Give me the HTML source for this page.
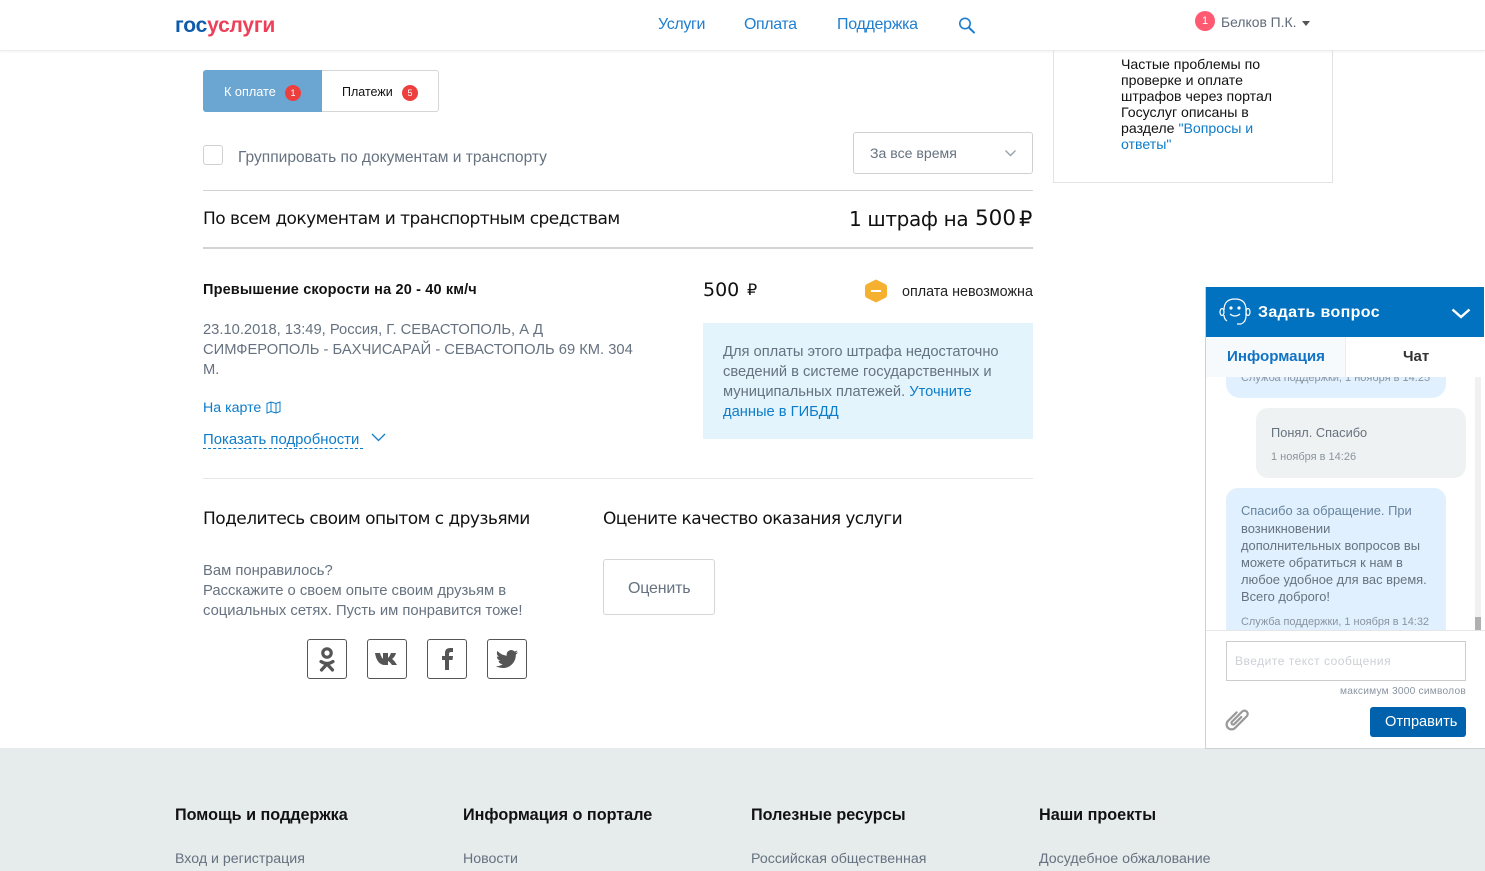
<!DOCTYPE html>
<html lang="ru"><head><meta charset="utf-8"><title>Госуслуги</title>
<style>
html,body{margin:0;padding:0;width:1485px;height:871px;overflow:hidden;background:#fff}
body{position:relative;font-family:"Liberation Sans","Noto Sans CJK SC",sans-serif;color:#66727f}
.a{position:absolute}
.t{position:absolute;white-space:nowrap;line-height:20px;font-size:14px}
.h{font-family:"DejaVu Sans",sans-serif;color:#111;font-size:17px;letter-spacing:-.54px}
.b{color:#0d7cc9}
.blk{color:#111}
.badge{position:absolute;width:16px;height:16px;border-radius:50%;background:#ee3f3f;color:#fff;font-size:9px;line-height:16px;text-align:center}
.soc{position:absolute;top:639px;width:38px;height:38px;border:1px solid #555;border-radius:3px}
.soc svg{position:absolute;left:0;top:0}
.f{font-size:14.2px;color:#66727f}
.ft{font-size:16.2px;font-weight:bold;color:#111}
.chat{font-size:12.9px;color:#66727f;line-height:17px}
</style></head><body>

<!-- header -->
<div class="a" style="left:0;top:0;width:1485px;height:50px;background:#fff;border-bottom:1px solid #ececec;box-shadow:0 1px 2px rgba(0,0,0,.05);z-index:3"></div>
<div style="z-index:4;position:absolute;left:0;top:0;width:1485px;height:50px">
<div class="t" style="left:175px;top:15px;font-size:21px;font-weight:bold;letter-spacing:-.2px;line-height:22px"><span style="color:#0d5cab">гос</span><span style="color:#ee3f58">услуги</span></div>
<div class="t" style="left:658px;top:15px;font-size:16px;color:#1f7fcf;letter-spacing:-.35px">Услуги</div>
<div class="t" style="left:744px;top:15px;font-size:16px;color:#1f7fcf;letter-spacing:-.4px">Оплата</div>
<div class="t" style="left:837px;top:15px;font-size:16px;color:#1f7fcf;letter-spacing:-.3px">Поддержка</div>
<svg class="a" style="left:958px;top:16.500px" width="18" height="17" viewBox="0 0 18 17" fill="none" stroke="#1f7fcf" stroke-width="1.600"><circle cx="7" cy="6.500" r="5.200"/><path d="M10.800 10.500l5.200 5" stroke-linecap="round" stroke-width="2"/></svg>
<div class="a" style="left:1195px;top:11px;width:20px;height:20px;border-radius:50%;background:#ff5a72;color:#fff;font-size:11px;line-height:20px;text-align:center">1</div>
<div class="t" style="left:1221px;top:12px;font-size:13.900px;color:#5f6b78">Белков П.К.</div>
<div class="a" style="left:1302px;top:21px;width:0;height:0;border-left:4px solid transparent;border-right:4px solid transparent;border-top:5px solid #555"></div>
</div>

<!-- right note -->
<div class="a" style="left:1053px;top:40px;width:278px;height:141px;border:1px solid #e3e3e3;background:#fff"></div>
<div class="t blk" style="left:1121px;top:54px;font-size:14.150px">Частые проблемы по</div>
<div class="t blk" style="left:1121px;top:70px;font-size:14.150px">проверке и оплате</div>
<div class="t blk" style="left:1121px;top:86px;font-size:14.150px">штрафов через портал</div>
<div class="t blk" style="left:1121px;top:102px;font-size:14.150px">Госуслуг описаны в</div>
<div class="t blk" style="left:1121px;top:118px;font-size:14.150px">разделе <span class="b">"Вопросы и</span></div>
<div class="t b" style="left:1121px;top:134px;font-size:14.150px">ответы"</div>

<!-- tabs -->
<div class="a" style="left:203px;top:70px;width:234px;height:40px;border:1px solid #d5d5d5;border-radius:3px;background:#fff"></div>
<div class="a" style="left:203px;top:70px;width:119px;height:42px;background:#6ba6d3;border-radius:3px 0 0 3px"></div>
<div class="t" style="left:224px;top:82px;font-size:12.700px;color:#fff">К оплате</div>
<div class="badge" style="left:285px;top:85px">1</div>
<div class="t" style="left:342px;top:82px;font-size:12.500px;color:#111">Платежи</div>
<div class="badge" style="left:402px;top:85px">5</div>

<!-- filter -->
<div class="a" style="left:203px;top:145px;width:18px;height:18px;border:1px solid #d0d0d0;border-radius:3px"></div>
<div class="t" style="left:238px;top:148px;font-size:15.550px;color:#66727f">Группировать по документам и транспорту</div>
<div class="a" style="left:853px;top:132px;width:178px;height:40px;border:1px solid #d0d0d0;border-radius:3px"></div>
<div class="t" style="left:870px;top:143px;font-size:14.100px;color:#66727f">За все время</div>
<svg class="a" style="left:1004px;top:149px" width="13" height="9" viewBox="0 0 13 9" fill="none" stroke="#9aa3ab" stroke-width="1.400"><path d="M1.500 1.500l5 5 5-5"/></svg>

<div class="a" style="left:203px;top:190px;width:830px;height:1px;background:#d3d3d3"></div>
<div class="t h" style="left:203px;top:209px">По всем документам и транспортным средствам</div>
<div class="t h" style="left:849px;top:209px;font-size:20px;letter-spacing:-.35px">1 штраф на</div>
<div class="t h" style="left:975px;top:209px;font-size:21.500px;letter-spacing:0">500</div>
<div class="t h" style="left:1019px;top:209px;font-size:21px;letter-spacing:0">₽</div>
<div class="a" style="left:203px;top:247px;width:830px;height:2px;background:#d3d3d3"></div>

<!-- fine -->
<div class="t" style="left:203px;top:280px;font-size:14.500px;letter-spacing:.15px;font-weight:bold;color:#111">Превышение скорости на 20 - 40 км/ч</div>
<div class="t" style="left:203px;top:320px;font-size:14.730px">23.10.2018, 13:49, Россия, Г. СЕВАСТОПОЛЬ, А Д</div>
<div class="t" style="left:203px;top:340px;font-size:14.730px">СИМФЕРОПОЛЬ - БАХЧИСАРАЙ - СЕВАСТОПОЛЬ 69 КМ. 304</div>
<div class="t" style="left:203px;top:360px;font-size:14.730px">М.</div>
<div class="t b" style="left:203px;top:398px;font-size:14.200px">На карте</div>
<svg class="a" style="left:266px;top:401px" width="15" height="13" viewBox="0 0 15 13" fill="none" stroke="#0d7cc9"><path d="M1 2.500l4-1.500 5 1.500 4-1.500v9.500l-4 1.500-5-1.500-4 1.500zM5 1v9.500M10 2.500v9.500"/></svg>
<div class="t b" style="left:203px;top:430px;font-size:14.900px">Показать подробности</div>
<div class="a" style="left:203px;top:448px;width:160px;border-top:1px dashed #0d7cc9"></div>
<svg class="a" style="left:371px;top:433px" width="15" height="10" viewBox="0 0 15 10" fill="none" stroke="#0d7cc9" stroke-width="1.300"><path d="M1 1l6.500 6.500L14 1"/></svg>

<div class="t h" style="left:703px;top:280px;font-size:19px;letter-spacing:0">500</div>
<div class="t h" style="left:747px;top:280px;font-size:16px;letter-spacing:0">₽</div>
<svg class="a" style="left:865px;top:279px" width="22" height="24" viewBox="0 0 22 24"><path d="M11 0.500l9 4.500q2 1 2 3v8q0 2-2 3l-9 4.500-9-4.500q-2-1-2-3v-8q0-2 2-3z" fill="#f4b02e"/><rect x="6" y="11" width="10" height="2" fill="#fff"/></svg>
<div class="t" style="left:902px;top:282px;font-size:14.330px;color:#222">оплата невозможна</div>

<div class="a" style="left:703px;top:323px;width:330px;height:116px;background:#e3f4fc"></div>
<div class="t" style="left:723px;top:342px;font-size:14.700px">Для оплаты этого штрафа недостаточно</div>
<div class="t" style="left:723px;top:362px;font-size:14.700px">сведений в системе государственных и</div>
<div class="t" style="left:723px;top:382px;font-size:14.700px">муниципальных платежей. <span class="b">Уточните</span></div>
<div class="t b" style="left:723px;top:402px;font-size:14.700px">данные в ГИБДД</div>

<div class="a" style="left:203px;top:478px;width:830px;height:1px;background:#e6e6e6"></div>

<!-- share -->
<div class="t h" style="left:203px;top:509px;letter-spacing:-.55px">Поделитесь своим опытом с друзьями</div>
<div class="t h" style="left:603px;top:509px;letter-spacing:-.6px">Оцените качество оказания услуги</div>
<div class="t" style="left:203px;top:561px;font-size:14.800px">Вам понравилось?</div>
<div class="t" style="left:203px;top:581px;font-size:14.800px">Расскажите о своем опыте своим друзьям в</div>
<div class="t" style="left:203px;top:601px;font-size:14.800px">социальных сетях. Пусть им понравится тоже!</div>
<div class="a" style="left:603px;top:559px;width:110px;height:54px;border:1px solid #d5d5d5;border-radius:3px"></div>
<div class="t" style="left:628px;top:579px;font-size:16px;letter-spacing:-.2px">Оценить</div>

<div class="soc" style="left:307px"><svg width="38" height="38" viewBox="0 0 38 38" fill="none" stroke="#555" stroke-width="3.200" stroke-linecap="round"><circle cx="19" cy="13" r="4.200"/><path d="M13 21.500q6 4 12 0M19 24l-5.500 6M19 24l5.500 6"/></svg></div>
<div class="soc" style="left:367px"><svg width="38" height="38" viewBox="0 0 38 38" fill="#555"><path d="M7 13h5q1 4 3 6v-6h5v5q2-2 3-5h5q-1 4-4 6 2 1 5 6h-5q-2-3-4-4v4h-3q-8 0-10-12z"/></svg></div>
<div class="soc" style="left:427px"><svg width="38" height="38" viewBox="0 0 38 38" fill="#555"><path d="M17 30V20h-3v-4h3v-3q0-5 5-5h3v4h-2q-2 0-2 2v2h4l-.5 4H21v10z"/></svg></div>
<div class="soc" style="left:487px"><svg width="38" height="38" viewBox="0 0 38 38" fill="#555"><path transform="translate(8 8) scale(.92)" d="M23.953 4.570a10 10 0 01-2.825.775 4.958 4.958 0 002.163-2.723c-.951.555-2.005.959-3.127 1.184a4.920 4.920 0 00-8.384 4.482C7.690 8.095 4.067 6.130 1.640 3.162a4.822 4.822 0 00-.666 2.475c0 1.710.870 3.213 2.188 4.096a4.904 4.904 0 01-2.228-.616v.060a4.923 4.923 0 003.946 4.827 4.996 4.996 0 01-2.212.085 4.936 4.936 0 004.604 3.417 9.867 9.867 0 01-6.102 2.105c-.390 0-.779-.023-1.170-.067a13.995 13.995 0 007.557 2.209c9.053 0 13.998-7.496 13.998-13.985 0-.210 0-.420-.015-.630A9.935 9.935 0 0024 4.590z"/></svg></div>

<!-- footer -->
<div class="a" style="left:0;top:748px;width:1485px;height:123px;background:#e6ebec"></div>
<div class="t ft" style="left:175px;top:805px">Помощь и поддержка</div>
<div class="t ft" style="left:463px;top:805px">Информация о портале</div>
<div class="t ft" style="left:751px;top:805px">Полезные ресурсы</div>
<div class="t ft" style="left:1039px;top:805px">Наши проекты</div>
<div class="t f" style="left:175px;top:849px">Вход и регистрация</div>
<div class="t f" style="left:463px;top:849px">Новости</div>
<div class="t f" style="left:751px;top:849px">Российская общественная</div>
<div class="t f" style="left:1039px;top:849px">Досудебное обжалование</div>

<!-- chat -->
<div class="a" style="left:1205px;top:287px;width:280px;height:462px;background:#fff;border-left:1px solid #d0d0d0;border-bottom:1px solid #d0d0d0;box-sizing:border-box;overflow:hidden">
 <div class="a" style="left:20px;top:60px;width:220px;height:51px;background:#e1f0fe;border-radius:0 0 14px 14px"></div>
 <div class="t" style="left:35px;top:81px;font-size:11px;color:#8a94a0">Служба поддержки, 1 ноября в 14:25</div>
 <div class="a" style="left:50px;top:121px;width:210px;height:70px;background:#eff2f3;border-radius:12px"></div>
 <div class="t" style="left:65px;top:136px;font-size:12.800px">Понял. Спасибо</div>
 <div class="t" style="left:65px;top:160px;font-size:11px;color:#8a94a0">1 ноября в 14:26</div>
 <div class="a" style="left:20px;top:201px;width:220px;height:142px;background:#e1f0fe;border-radius:12px 12px 0 0"></div>
 <div class="t chat" style="left:35px;top:214px;color:#66849e;line-height:20px">Спасибо за обращение. При</div>
 <div class="t chat" style="left:35px;top:232px;line-height:20px">возникновении</div>
 <div class="t chat" style="left:35px;top:249px;line-height:20px">дополнительных вопросов вы</div>
 <div class="t chat" style="left:35px;top:266px;line-height:20px">можете обратиться к нам в</div>
 <div class="t chat" style="left:35px;top:283px;line-height:20px">любое удобное для вас время.</div>
 <div class="t chat" style="left:35px;top:300px;line-height:20px">Всего доброго!</div>
 <div class="t" style="left:35px;top:325px;font-size:10.950px;color:#8a94a0">Служба поддержки, 1 ноября в 14:32</div>
 <div class="a" style="left:0;top:0;width:278px;height:50px;background:#0072c0"></div>
 <svg class="a" style="left:13px;top:10px" width="32" height="32" viewBox="0 0 32 32" fill="none" stroke="#fff" stroke-width="1.200"><path d="M5 13q0-11 11-11t11 11v6q0 6-5 8h-4"/><path d="M5 18q0 4 3 6"/><ellipse cx="3" cy="15" rx="2" ry="3.500"/><ellipse cx="29" cy="15" rx="2" ry="3.500"/><circle cx="12" cy="11" r="1" fill="#fff"/><circle cx="20" cy="11" r="1" fill="#fff"/><path d="M11 17q5 4 10 0"/></svg>
 <div class="t" style="left:52px;top:16px;font-size:16px;font-weight:bold;color:#fff;letter-spacing:.35px">Задать вопрос</div>
 <svg class="a" style="left:245px;top:21px" width="20" height="12" viewBox="0 0 20 12" fill="none" stroke="#fff" stroke-width="2.500"><path d="M1.500 1.500L10 9l8.500-7.500"/></svg>
 <div class="a" style="left:0;top:50px;width:139px;height:40px;background:#f6fafd;border-right:1px solid #eaeef1"></div>
 <div class="a" style="left:140px;top:50px;width:138px;height:40px;background:#fff"></div>
 <div class="t" style="left:21px;top:60px;font-size:15.100px;font-weight:bold;color:#1272c4">Информация</div>
 <div class="t" style="left:197px;top:60px;font-size:15px;font-weight:bold;color:#333">Чат</div>
 <div class="a" style="left:269px;top:90px;width:6px;height:253px;background:#f1f1f1"></div>
 <div class="a" style="left:269px;top:330px;width:6px;height:13px;background:#b0b0b0"></div>
 <div class="a" style="left:0;top:343px;width:279px;height:118px;background:#fff;border-top:1px solid #e6e6e6;box-sizing:border-box"></div>
 <div class="a" style="left:20px;top:354px;width:238px;height:38px;border:1px solid #ccc"></div>
 <div class="t" style="left:29px;top:364px;font-size:12px;color:#ccd0d6;letter-spacing:.5px">Введите текст сообщения</div>
 <div class="t" style="left:134px;top:395px;font-size:10.200px;color:#8a94a0;letter-spacing:.22px">максимум 3000 символов</div>
 <svg class="a" style="left:18px;top:419px" width="26" height="26" viewBox="-13 -13 26 26" fill="none" stroke="#999" stroke-width="2" stroke-linecap="round"><path transform="rotate(45) scale(1.100)" d="M-4.500 -4V7a4.500 4.500 0 0 0 9 0V-8a3 3 0 0 0-6 0V5a1.300 1.300 0 0 0 3 0V-4"/></svg>
 <div class="a" style="left:164px;top:420px;width:96px;height:30px;background:#0061ad;border-radius:3px;color:#fff;font-size:14.600px;line-height:30px;padding-left:15px;box-sizing:border-box;white-space:nowrap">Отправить</div>
</div>
</body></html>
